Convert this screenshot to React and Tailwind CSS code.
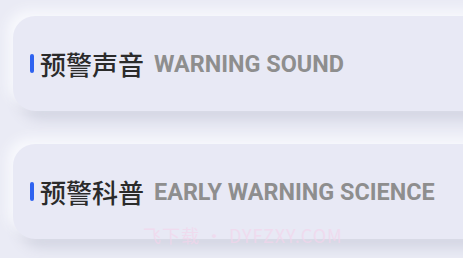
export default function App() {
  const items = [
    { cn: '预警声音', en: 'WARNING SOUND' },
    { cn: '预警科普', en: 'EARLY WARNING SCIENCE' },
  ];

  return (
    <div className="w-[463px] h-[258px] overflow-hidden bg-[#eaebf5] pt-4 pl-[13px] relative">
      <div className="flex flex-col gap-[33px] -mr-8">
        {items.map((it) => (
          <div
            key={it.en}
            className="h-[95px] rounded-[22px] bg-[#e8e9f5] flex items-center pl-[17px] shadow-[-6px_-6px_12px_#f8f9fd,6px_8px_14px_#d0d2e0]"
          >
            <span className="w-[4px] h-[19px] rounded-full bg-[#2e62f0] mr-[6px]" />
            <span
              className="text-[26px] leading-none text-[#2b2b2b] font-medium mr-[10px]"
              style={{ fontFamily: '"Noto Sans CJK SC", sans-serif' }}
            >
              {it.cn}
            </span>
            <span
              className="text-[23.4px] leading-none font-bold text-[#8e8e8e] pt-[2px]"
              style={{ fontFamily: 'Roboto, sans-serif' }}
            >
              {it.en}
            </span>
          </div>
        ))}
      </div>
      <div
        className="absolute left-[143px] top-[226px] text-[18px] leading-none text-[#f3d6ec] opacity-70 tracking-[1px]"
        style={{ fontFamily: '"Noto Sans CJK SC", sans-serif' }}
      >
        飞下载 · DYFZXY.COM
      </div>
    </div>
  );
}
